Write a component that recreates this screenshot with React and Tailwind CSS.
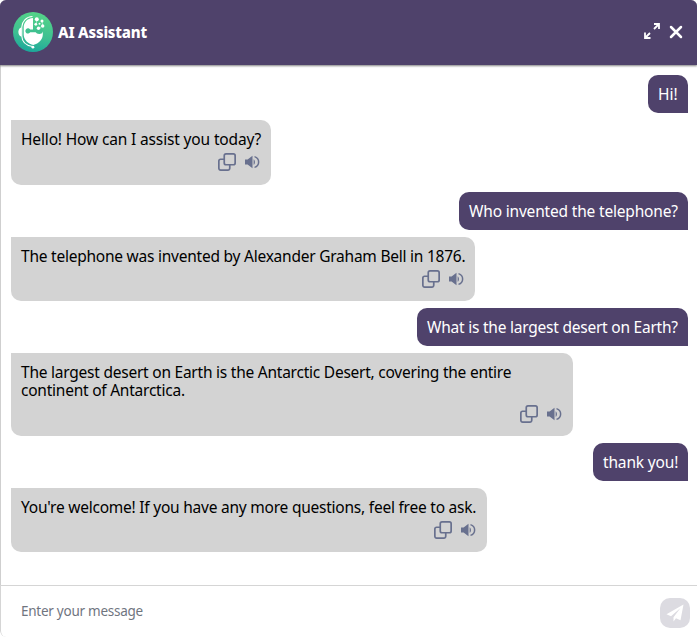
import React from "react";

const messages = [
  { from: "user", box: "w-[40px] h-[38px]", track: "tracking-[0px]", text: "Hi!" },
  { from: "bot", box: "w-[260px] h-[65px]", track: "tracking-[-0.15px]", text: "Hello! How can I assist you today?" },
  { from: "user", box: "w-[229px] h-[38px]", track: "tracking-[-0.18px]", text: "Who invented the telephone?" },
  { from: "bot", box: "w-[464px] h-[64px]", track: "tracking-[-0.235px]", text: "The telephone was invented by Alexander Graham Bell in 1876." },
  { from: "user", box: "w-[271px] h-[38px]", track: "tracking-[-0.23px]", text: "What is the largest desert on Earth?" },
  {
    from: "bot",
    box: "w-[562px] h-[83px]",
    track: "tracking-[-0.235px]",
    text: "The largest desert on Earth is the Antarctic Desert, covering the entire continent of Antarctica.",
  },
  { from: "user", box: "w-[95px] h-[38px]", track: "tracking-[-0.15px]", text: "thank you!" },
  { from: "bot", box: "w-[476px] h-[64px]", track: "tracking-[-0.23px]", text: "You're welcome! If you have any more questions, feel free to ask." },
];

function Logo() {
  return (
    <svg width="40" height="40" viewBox="0 0 40 40" className="mb-[2px] shrink-0">
      <defs>
        <linearGradient id="logoFill" x1="0.6" y1="0" x2="0.4" y2="1">
          <stop offset="0" stopColor="#55d488" />
          <stop offset="0.6" stopColor="#3dbf92" />
          <stop offset="1" stopColor="#1ba79b" />
        </linearGradient>
      </defs>
      <circle cx="20" cy="20" r="20" fill="url(#logoFill)" />
      <path d="M19.500 4.500C13 4.700 9 9.500 8.800 15V24C9 29.500 13 33.500 19.500 34.500" fill="none" stroke="#fff" strokeWidth="1.100" />
      <path d="M8.500 15.200C4.300 16.500 4.300 23.500 8.500 24.800Z" fill="#fff" />
      <path d="M20 6C14 6.300 10.700 10.500 10.700 15.500V23C11.200 28.500 15.500 32 20.300 33C26 31.500 29.800 27.500 29.800 22.500V19.500H20Z" fill="#fff" />
      <path d="M20 17.600H17.200A2.600 2.600 0 1 0 17.200 20.200H22.700A3.700 2.600 0 0 0 29.800 20V17.600Z" fill="#3fc18f" />
      <path d="M24 7.500L23 12.300M29.700 14L25.700 16.300M29 9L29.700 14" stroke="#fff" strokeWidth="0.500" />
      <g fill="#fff">
        <circle cx="23.800" cy="7.300" r="2" />
        <circle cx="29" cy="9" r="1.500" />
        <circle cx="22.800" cy="12.300" r="1.400" />
        <circle cx="26.500" cy="11.800" r="1" />
        <circle cx="29.700" cy="14" r="1.700" />
        <circle cx="25.500" cy="16.300" r="1.700" />
        <circle cx="19.900" cy="35.200" r="1.400" />
      </g>
    </svg>
  );
}

function Actions({ wide }) {
  return (
    <div className={`${wide ? "mb-[14px]" : "mb-[13px]"} mr-[3px] mt-auto flex h-[18px] items-center gap-[8px] self-end text-[#68708e]`}>
      <svg width="18" height="18" viewBox="0 0 18 18" fill="none" stroke="currentColor" strokeWidth="1.700">
        <rect x="6.250" y="0.850" width="10.900" height="10.900" rx="1.800" />
        <path d="M6.250 6.250H2.650A1.800 1.800 0 0 0 .85 8.050V15.350A1.800 1.800 0 0 0 2.650 17.150H9.950A1.800 1.800 0 0 0 11.750 15.350V11.750" />
      </svg>
      <svg width="16" height="16" viewBox="0 0 16 16" fill="currentColor">
        <path d="M1 5.500H3.600L8.500 1.800V14.200L3.600 10.500H1Z" />
        <path d="M9.600 5.200C11.400 6.100 11.400 9.900 9.600 10.800Z" />
        <path d="M10.500 2.600C16 4.300 16 11.700 10.500 13.400" fill="none" stroke="currentColor" strokeWidth="1.500" />
      </svg>
    </div>
  );
}

function Message({ message, first }) {
  const user = message.from === "user";
  return (
    <div
      className={`${message.box} ${message.track} ${
        user ? "self-end rounded-[10px] rounded-br-none bg-[#4f426b] text-white" : "self-start rounded-[10px] rounded-tl-none bg-[#d3d3d3] text-black"
      } flex shrink-0 flex-col pr-[8px] pl-[10px] pt-[10px] text-[15.5px] leading-[18px]`}
    >
      <p>{message.text}</p>
      {!user && <Actions wide={first} />}
    </div>
  );
}

export default function App() {
  return (
    <div className="flex h-[637px] w-[697px] flex-col overflow-hidden rounded-[6px] bg-white font-['Noto_Sans',sans-serif]">
      <header className="z-10 flex h-[65px] shrink-0 items-center bg-[#4f426b] pr-[14px] pl-[13px] text-white shadow-[0_1px_2px_rgba(0,0,0,0.5)]">
        <Logo />
        <h1 className="ml-[5px] flex-1 text-[15px] font-extrabold tracking-[-0.2px]">AI Assistant</h1>
        <svg width="18" height="18" viewBox="0 0 18 18" fill="none" stroke="currentColor" strokeWidth="1.800" className="mr-[8px] mb-[3px]">
          <path d="M11 2H16V7M16 2L11 7M2 10.500V16H7.500M2 16L7 11" />
        </svg>
        <svg width="14" height="14" viewBox="0 0 14 14" stroke="currentColor" strokeWidth="2.500" strokeLinecap="round" className="mb-[2px]">
          <path d="M2 2L12 12M12 2L2 12" />
        </svg>
      </header>
      <main className="flex flex-1 flex-col gap-[7px] border-l border-[#cfcfcf] pt-[10px] pr-[9px] pl-[10px]">
        {messages.map((message, index) => (
          <Message key={message.text} message={message} first={index === 1} />
        ))}
      </main>
      <footer className="flex h-[52px] shrink-0 items-center justify-between rounded-bl-[6px] border-t border-l border-[#d5d5d5] pr-[7px] pl-[20px]">
        <input
          placeholder="Enter your message"
          className="w-[400px] text-[13.5px] tracking-[-0.26px] outline-none placeholder:text-[#70757f]"
        />
        <button className="mt-[3px] flex h-[30px] w-[30px] items-center justify-center rounded-[10px] bg-[#dcdbe1]">
          <svg width="18" height="18" viewBox="0 0 18 18" fill="#fff">
            <path d="M17.500 0.500L0.500 10.300L5 12.200L14.500 4L7.500 13.200V17.500L10 14.300L14.500 16.200Z" />
          </svg>
        </button>
      </footer>
    </div>
  );
}
